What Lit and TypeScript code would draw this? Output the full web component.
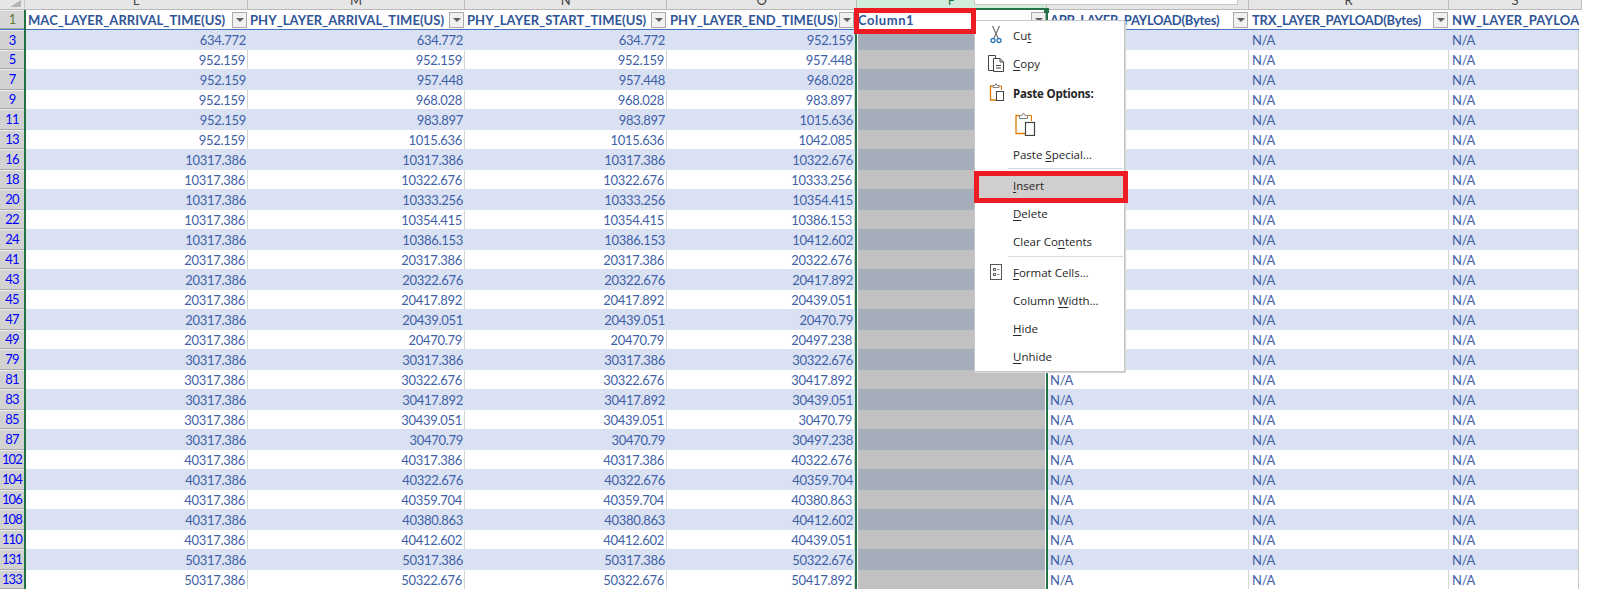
import { LitElement, html, css, svg } from "lit";
import { customElement } from "lit/decorators.js";

const RAW = `3 634.772 634.772 634.772 952.159
5 952.159 952.159 952.159 957.448
7 952.159 957.448 957.448 968.028
9 952.159 968.028 968.028 983.897
11 952.159 983.897 983.897 1015.636
13 952.159 1015.636 1015.636 1042.085
16 10317.386 10317.386 10317.386 10322.676
18 10317.386 10322.676 10322.676 10333.256
20 10317.386 10333.256 10333.256 10354.415
22 10317.386 10354.415 10354.415 10386.153
24 10317.386 10386.153 10386.153 10412.602
41 20317.386 20317.386 20317.386 20322.676
43 20317.386 20322.676 20322.676 20417.892
45 20317.386 20417.892 20417.892 20439.051
47 20317.386 20439.051 20439.051 20470.79
49 20317.386 20470.79 20470.79 20497.238
79 30317.386 30317.386 30317.386 30322.676
81 30317.386 30322.676 30322.676 30417.892
83 30317.386 30417.892 30417.892 30439.051
85 30317.386 30439.051 30439.051 30470.79
87 30317.386 30470.79 30470.79 30497.238
102 40317.386 40317.386 40317.386 40322.676
104 40317.386 40322.676 40322.676 40359.704
106 40317.386 40359.704 40359.704 40380.863
108 40317.386 40380.863 40380.863 40412.602
110 40317.386 40412.602 40412.602 40439.051
131 50317.386 50317.386 50317.386 50322.676
133 50317.386 50322.676 50322.676 50417.892`;
const ROWS = RAW.split("\n").map((l) => l.split(" "));

const LETTERS = ["L", "M", "N", "O", "P", "", "R", "S"];
const HEADERS = [
  { text: "MAC_LAYER_ARRIVAL_TIME(US)", cls: "us" },
  { text: "PHY_LAYER_ARRIVAL_TIME(US)", cls: "us tight" },
  { text: "PHY_LAYER_START_TIME(US)", cls: "us tight" },
  { text: "PHY_LAYER_END_TIME(US)", cls: "us" },
  { text: "Column1", cls: "col" },
  { text: "APP_LAYER_PAYLOAD(Bytes)", cls: "bytes" },
  { text: "TRX_LAYER_PAYLOAD(Bytes)", cls: "bytes" },
  { text: "NW_LAYER_PAYLOA", cls: "nw" },
];

const ICONS = {
  cut: svg`<svg width="20" height="20" viewBox="0 0 20 20" fill="none">
    <path d="M6.5 1 L12 13 M13.5 1 L8 13" stroke="#6b6b6b" stroke-width="1.1"/>
    <circle cx="7" cy="15.5" r="2" stroke="#2e75b6" stroke-width="1.3"/>
    <circle cx="13" cy="15.5" r="2" stroke="#2e75b6" stroke-width="1.3"/></svg>`,
  copy: svg`<svg width="20" height="20" viewBox="0 0 20 20" fill="none" stroke="#444" stroke-width="1">
    <path d="M7.5 17.5 H2.5 V2.5 H9.5 V5"/>
    <path d="M7.5 5.5 H14 L17.5 9 V18.5 H7.5 Z" fill="#fff"/>
    <path d="M14 5.5 V9 H17.5 M10 12.5 H15 M10 15 H15"/></svg>`,
  paste: svg`<svg width="20" height="20" viewBox="0 0 20 20" fill="none">
    <path d="M7 4 H4.500 V18 H10" stroke="#e07b00" stroke-width="1.300"/>
    <path d="M13 4 H15.500 V8" stroke="#e07b00" stroke-width="1"/>
    <path d="M7 5.500 V3.500 H9 L10 1.500 L11 3.500 H13 V5.500 Z" fill="#fff" stroke="#808080"/>
    <rect x="10.500" y="9.500" width="7" height="9" fill="#fff" stroke="#444"/></svg>`,
  pasteBig: svg`<svg width="21" height="24" viewBox="0 0 21 24" fill="none">
    <path d="M4.500 3.500 H1 V21.500 H10" stroke="#e07b00" stroke-width="1.300"/>
    <path d="M12.500 3.500 H16.500 V9" stroke="#e07b00" stroke-width="1"/>
    <path d="M4.500 6.500 V3.500 H7 L8.500 1 L10 3.500 H12.500 V6.500 Z" fill="#fff" stroke="#808080"/>
    <rect x="10.500" y="10.500" width="9" height="13" fill="#fff" stroke="#444" stroke-width="1.200"/></svg>`,
  format: svg`<svg width="20" height="20" viewBox="0 0 20 20" fill="none">
    <rect x="4.500" y="2.500" width="11" height="15" stroke="#555"/>
    <rect x="7.500" y="6.500" width="2" height="2" stroke="#666"/>
    <rect x="7.500" y="11.500" width="2" height="2" stroke="#666"/>
    <path d="M11 7.500 H13.500 M11 12.500 H13.500" stroke="#888"/></svg>`,
};

@customElement("app-root")
export class AppRoot extends LitElement {
  static styles = css`
    :host {
      display: block;
      position: relative;
      width: 1597px;
      height: 596px;
      overflow: hidden;
      background: #fff;
      font-family: Lato, "Liberation Sans", sans-serif;
      font-size: 13px;
      letter-spacing: -0.3px;
      color: #3f5fa8;
    }
    .row {
      display: grid;
      grid-template-columns: 25px 223px 217px 202px 188px 192px 202px 200px 130px;
      width: 1579px;
    }
    .letters {
      height: 10px;
      width: 1582px;
      grid-template-columns: 25px 223px 217px 202px 190px 190px 202px 200px 133px;
      background: #e6e6e6;
      box-sizing: border-box;
      border-bottom: 1px solid #b9b9b9;
      overflow: hidden;
      color: #444;
      line-height: 0;
      font-size: 13px;
    }
    .corner {
      position: relative;
      border-right: 1px solid #c8c8c8;
    }
    .corner::after {
      content: "";
      position: absolute;
      right: 3px;
      bottom: 2px;
      border-style: solid;
      border-width: 0 0 7px 11px;
      border-color: transparent transparent #b5b5b5 transparent;
    }
    .letter {
      text-align: center;
      border-right: 1px solid #bdbdbd;
    }
    .letter.sel {
      background: #d2ecdc;
      color: #217346;
    }
    .head {
      height: 20px;
      box-sizing: border-box;
      border-bottom: 1px solid #4472c4;
      width: 1579px;
    }
    .num {
      background: #d2d2d2;
      border-bottom: 1px solid #a9a9a9;
      box-shadow: inset 0 1px 0 #ececec;
      text-align: center;
      color: #0000ff;
      display: flex;
      align-items: center;
      justify-content: center;
      letter-spacing: -0.8px;
      padding-right: 1px;
      box-sizing: border-box;
      overflow: hidden;
    }
    .head .num {
      color: #5c7d3c;
      background: #d6d6d6;
      border-bottom: 1px solid #a9a9a9;
    }
    .hc {
      display: flex;
      align-items: center;
      padding-left: 3px;
      font-weight: 700;
      color: #2f5597;
      overflow: hidden;
      white-space: nowrap;
      min-width: 0;
      justify-content: space-between;
    }
    .hc span {
      min-width: 0;
      padding-top: 1px;
    }
    .hc.tight {
      padding-left: 2px;
    }
    .hc.us {
      letter-spacing: 0.05px;
    }
    .hc.col {
      letter-spacing: 0.55px;
    }
    .hc.bytes {
      letter-spacing: -0.25px;
    }
    .hc.nw {
      letter-spacing: 0.2px;
    }
    .btn {
      flex: none;
      width: 15px;
      height: 16px;
      margin-right: 1px;
      box-sizing: border-box;
      border: 1px solid #ababab;
      background: #f1f1f1;
      display: flex;
      align-items: center;
      justify-content: center;
    }
    .btn::after {
      content: "";
      border-style: solid;
      border-width: 4px 4px 0 4px;
      border-color: #606060 transparent transparent transparent;
    }
    .r {
      height: 19px;
    }
    .r.s {
      height: 21px;
      background: #d9e1f2;
    }
    .r.first {
      height: 20px;
    }
    .c {
      display: flex;
      align-items: center;
      box-sizing: border-box;
      overflow: hidden;
      white-space: nowrap;
    }
    .c.n {
      justify-content: flex-end;
      padding-right: 2px;
    }
    .c.t {
      padding-left: 3px;
    }
    .r:not(.s) .c {
      border-right: 1px solid #d4d4d4;
    }
    .r .c.end {
      border-right: 1px solid #c8c8c8;
    }
    .c.g,
    .r:not(.s) .c.g {
      background: #c1c1c1;
      border-left: 3px solid #fff;
      border-right: 2px solid #fff;
    }
    .r.s .c.g {
      background: #a6adba;
    }
    .v {
      position: absolute;
      top: 10px;
      width: 2px;
      height: 579px;
      background: #217346;
    }
    .v.a { left: 24px; }
    .v.b { left: 855px; }
    .v.c2 { left: 1046px; }
    .topline {
      position: absolute;
      left: 857px;
      top: 8px;
      width: 190px;
      height: 2px;
      background: #217346;
    }
    .handle {
      position: absolute;
      left: 1044px;
      top: 8px;
      width: 5px;
      height: 5px;
      background: #217346;
    }
    .mini {
      position: absolute;
      left: 974px;
      top: 0;
      width: 264px;
      height: 5px;
      box-sizing: border-box;
      background: #fff;
      border: 1px solid #c6c6c6;
      border-top: 0;
    }
    .red {
      position: absolute;
      box-sizing: border-box;
      border: 5px solid #ed1c24;
    }
    .red.one { left: 854px; top: 8px; width: 122px; height: 26px; }
    .red.two { left: 974px; top: 171px; width: 154px; height: 32px; }
    .menu {
      position: absolute;
      left: 974px;
      top: 20px;
      width: 151px;
      height: 352px;
      box-sizing: border-box;
      background: #fff;
      border: 1px solid #c6c6c6;
      box-shadow: 1px 1px 1px #d8d8d8;
      font-family: "Open Sans", "Liberation Sans", sans-serif;
      font-size: 11.500px;
      letter-spacing: 0;
      color: #262626;
    }
    .item {
      display: flex;
      align-items: center;
      height: 28px;
      margin-right: 1px;
    }
    .item.hot {
      background: #d0cfcd;
    }
    .slot {
      flex: none;
      width: 38px;
      box-sizing: border-box;
      padding-left: 11px;
      display: flex;
      align-items: center;
    }
    .bold {
      font-weight: 700;
      height: 29px;
      letter-spacing: -0.2px;
    }
    .bold .label {
      padding-top: 4px;
    }
    .big {
      height: 34px;
      padding-left: 40px;
      display: flex;
      align-items: flex-start;
      padding-top: 6px;
      box-sizing: border-box;
    }
    .sep {
      height: 1px;
      margin: 0 1px 0 33px;
      background: #dadada;
    }
    .sep.s1 { margin-bottom: 2px; }
    .sep.s2 { margin: 1px 1px 1px 33px; }
    u {
      text-underline-offset: 2px;
    }
  `;

  private headerRow() {
    return html`<div class="row head">
      <div class="num">1</div>
      ${HEADERS.map(
        (h, i) => html`<div class="hc ${h.cls}">
          <span>${h.text}</span>${i < 7 ? html`<i class="btn"></i>` : ""}
        </div>`,
      )}
    </div>`;
  }

  private dataRow(d: string[], i: number) {
    const cls = `row r ${i % 2 === 0 ? "s" : ""} ${i === 0 ? "first" : ""}`;
    return html`<div class=${cls}>
      <div class="num">${d[0]}</div>
      <div class="c n">${d[1]}</div>
      <div class="c n">${d[2]}</div>
      <div class="c n">${d[3]}</div>
      <div class="c n">${d[4]}</div>
      <div class="c g"></div>
      <div class="c t">N/A</div>
      <div class="c t">N/A</div>
      <div class="c t end">N/A</div>
    </div>`;
  }

  private item(label: unknown, icon?: unknown, hot = false) {
    return html`<div class="item ${hot ? "hot" : ""}">
      <div class="slot">${icon ?? ""}</div>
      <div>${label}</div>
    </div>`;
  }

  render() {
    return html`
      <div class="row letters">
        <div class="corner"></div>
        ${LETTERS.map(
          (l) => html`<div class="letter ${l === "P" ? "sel" : ""}">${l}</div>`,
        )}
      </div>
      ${this.headerRow()} ${ROWS.map((d, i) => this.dataRow(d, i))}

      <div class="v a"></div>
      <div class="v b"></div>
      <div class="v c2"></div>
      <div class="topline"></div>
      <div class="handle"></div>
      <div class="mini"></div>

      <div class="menu">
        ${this.item(html`Cu<u>t</u>`, ICONS.cut)}
        ${this.item(html`<u>C</u>opy`, ICONS.copy)}
        <div class="item bold">
          <div class="slot">${ICONS.paste}</div>
          <div class="label">Paste Options:</div>
        </div>
        <div class="big">${ICONS.pasteBig}</div>
        ${this.item(html`Paste <u>S</u>pecial...`)}
        <div class="sep s1"></div>
        ${this.item(html`<u>I</u>nsert`, undefined, true)}
        ${this.item(html`<u>D</u>elete`)}
        ${this.item(html`Clear Co<u>n</u>tents`)}
        <div class="sep s2"></div>
        ${this.item(html`<u>F</u>ormat Cells...`, ICONS.format)}
        ${this.item(html`Column <u>W</u>idth...`)}
        ${this.item(html`<u>H</u>ide`)}
        ${this.item(html`<u>U</u>nhide`)}
      </div>

      <div class="red one"></div>
      <div class="red two"></div>
    `;
  }
}
